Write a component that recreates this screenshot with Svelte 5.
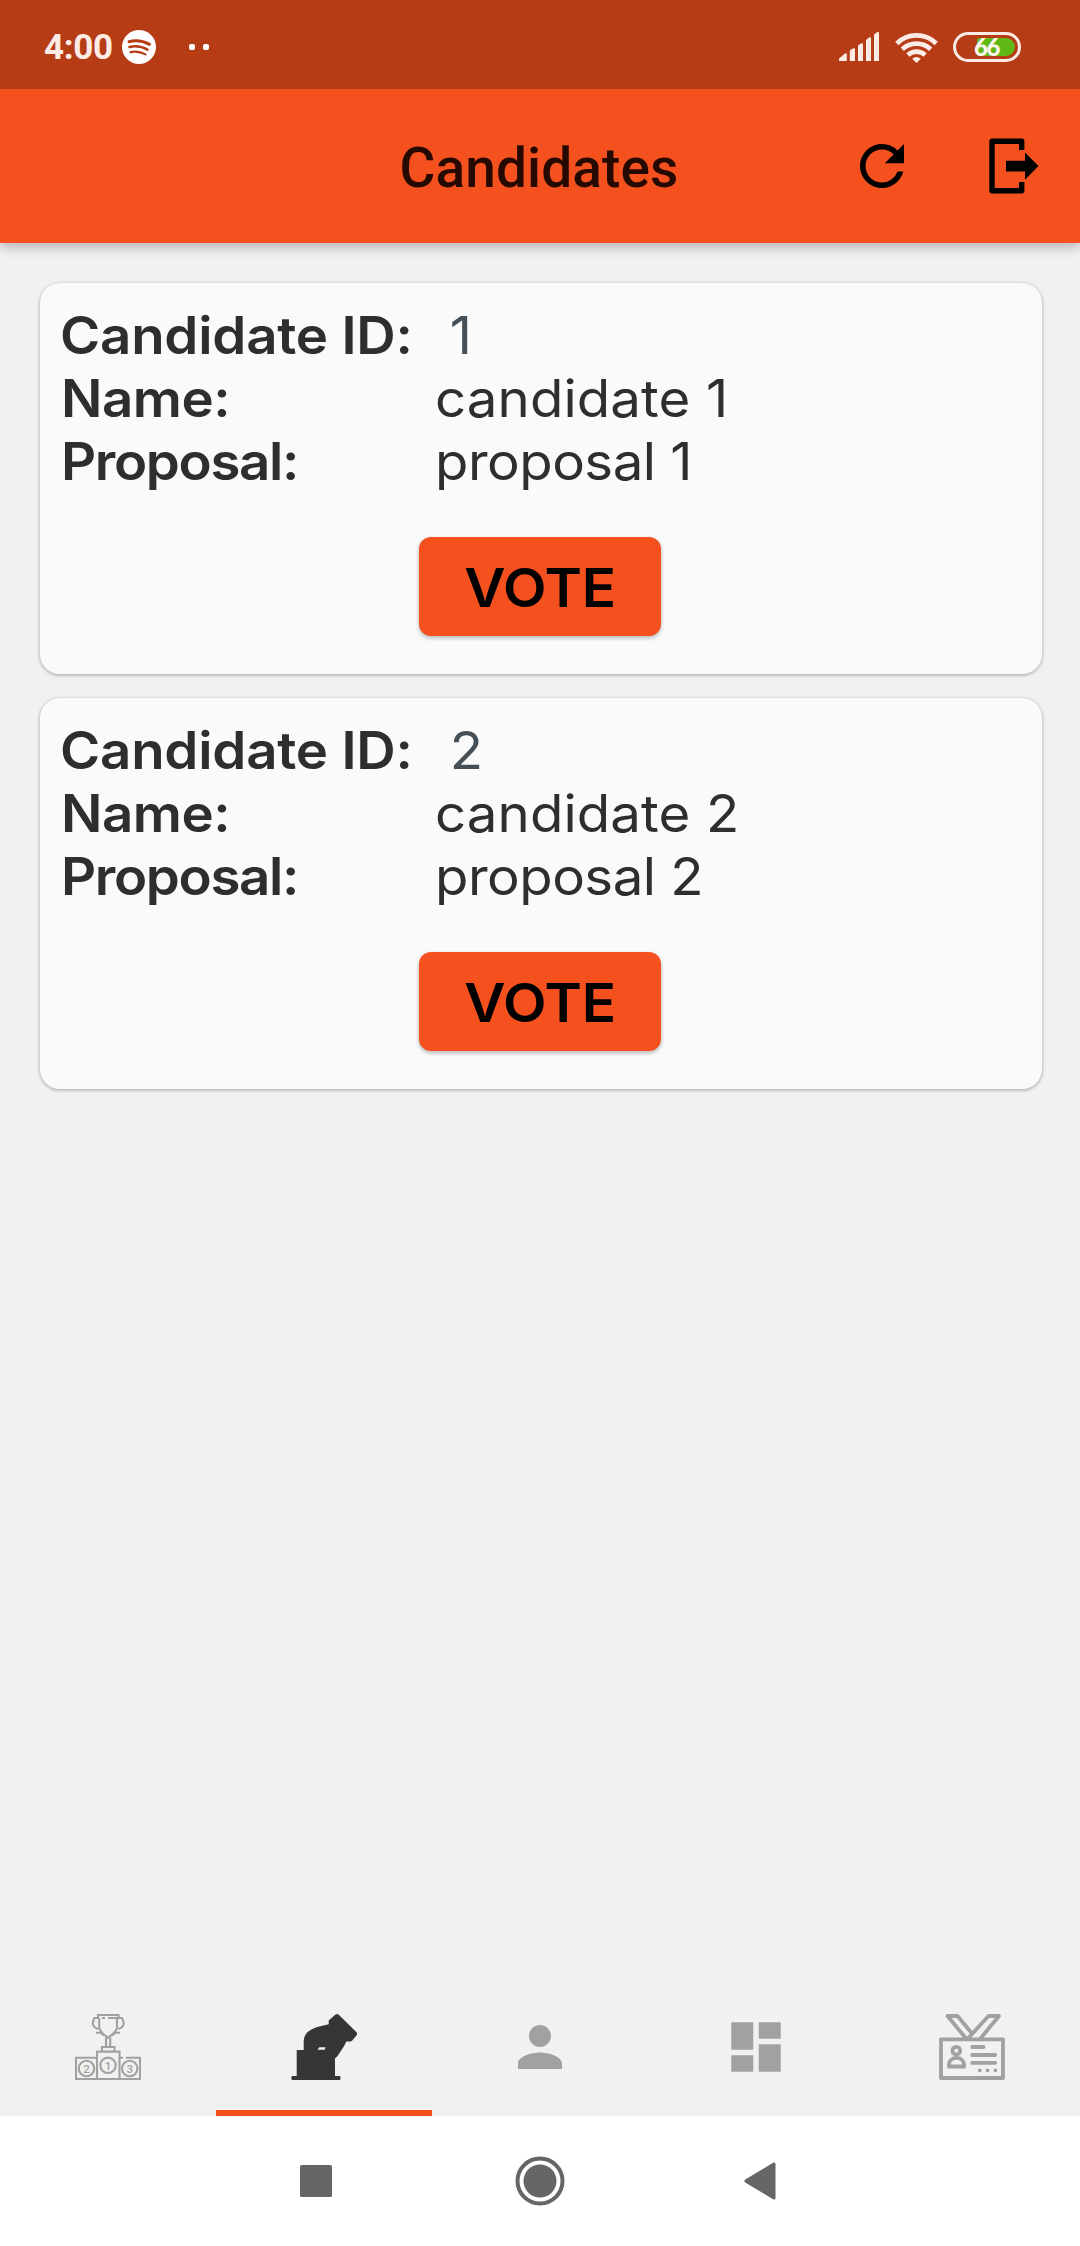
<script>
  const candidates = [
    { id: '1', name: 'candidate 1', proposal: 'proposal 1' },
    { id: '2', name: 'candidate 2', proposal: 'proposal 2' }
  ];
</script>

<div class="screen">
  <div class="status">
    <span class="time">4:00</span>
    <svg class="music" width="34" height="34" viewBox="0 0 34 34">
      <circle cx="17" cy="17" r="17" fill="#fff" />
      <g fill="none" stroke="#b63c16" stroke-linecap="round">
        <path d="M7 11.7q10.500-2.700 20.500 2.600" stroke-width="3" />
        <path d="M7.500 17q9.500-2.300 18 2.600" stroke-width="2.500" />
        <path d="M8.500 22.200q8-1.700 15 2.200" stroke-width="2.200" />
      </g>
    </svg>
    <span class="dots"><i></i><i></i></span>
    <span class="grow"></span>
    <svg class="signal" width="40" height="30" viewBox="0 0 40 30" fill="#fdebe5">
      <path d="M0 29v-2.500l6-5q1.800-.8 1.800.6V29zM10.800 29V18.500l3-2q2.200-.8 2.200.5v12zM19 29V13.500l3-2q2-.8 2 .5v17zM27 29V8l3-2.500q2-.8 2 .5v23zM35 29V2.500L38 .3q2-.8 2 .7v28z" />
    </svg>
    <svg class="wifi" width="43" height="31" viewBox="0 0 43 31" fill="none" stroke="#fdebe5" stroke-width="4.700">
      <path d="M1.800 11.500a28 28 0 0 1 39.400 0M7.300 17.300a20.500 20.500 0 0 1 28.400 0M12.800 23a13 13 0 0 1 17.400 0" />
      <path d="M17.200 26.700q4.300-3.300 8.600 0L21.500 31z" fill="#fdebe5" stroke="none" />
    </svg>
    <span class="battery"><span class="level"></span><b>66</b></span>
  </div>

  <header>
    <h1>Candidates</h1>
    <div class="actions">
      <svg width="66" height="66" viewBox="0 0 24 24">
        <path d="M17.650 6.350A7.958 7.958 0 0 0 12 4c-4.420 0-7.990 3.580-7.990 8s3.570 8 7.990 8c3.730 0 6.840-2.550 7.730-6h-2.080A5.990 5.990 0 0 1 12 18c-3.310 0-6-2.690-6-6s2.690-6 6-6c1.660 0 3.140.69 4.220 1.780L13 11h7V4z" />
      </svg>
      <svg width="50" height="56" viewBox="0 0 50 56">
        <path d="M32.700 12V3.200H3v49.600h29.700V44" fill="none" stroke="#000" stroke-width="5.400" stroke-linejoin="round" />
        <path d="M17 22.700h19V14.400L49.500 28 36 41.700v-8.300H17z" />
      </svg>
    </div>
  </header>

  <main>
    {#each candidates as c}
      <section class="card">
        <dl>
          <dt class="id">Candidate ID:</dt><dd class="number">{c.id}</dd>
          <dt class="name">Name:</dt><dd class="name">{c.name}</dd>
          <dt class="proposal">Proposal:</dt><dd class="proposal">{c.proposal}</dd>
        </dl>
        <button><span>VOTE</span></button>
      </section>
    {/each}
  </main>

  <nav class="tabs">
    <div class="tab">
      <svg width="66" height="66" viewBox="0 0 66 66" fill="none" stroke="#a1a1a1" stroke-width="2.100">
        <path d="M23 4V1h20.500v3M27 4h3M33 4h10.500M24.200 4v10q.8 4 8.800 9.800 8-5.800 9-9.800V4M24 4h-4.500q-4.500 8.500 3.500 11M42.500 4h4.500q4.500 8.500-3.500 11M21 18.700h5l2.500 2.500M45 18.700h-5l-2.500 2.500M31 23.500V33M35.200 23.500V33M27 37v-4h12.500v4" />
        <path d="M22 65V37.600h22.500V65M22 43.700H1V65h64V43.700H51M44.500 43.700H48" />
        <circle cx="11.500" cy="54.500" r="7.700" /><circle cx="33" cy="51.300" r="7.700" /><circle cx="54.700" cy="54.500" r="7.700" />
        <g class="places" fill="#a1a1a1" stroke="none" text-anchor="middle">
          <text x="11.500" y="58.700">2</text><text x="33" y="55.500">1</text><text x="54.700" y="58.700">3</text>
        </g>
      </svg>
    </div>
    <div class="tab active">
      <svg width="66" height="66" viewBox="0 0 66 66" fill="#363636">
        <path fill-rule="evenodd" d="M1 62h4.700V36h7V26.500q.5-7 7.600-11l5-2.300 12.400-2.900V6.500L44.500.6q1.500-1.200 3 0L65.300 18q1.400 1.500.3 3.200l-4.100 5q-1 1.200-2.500 1.200h-3.700L53 32.300l-7 10.500-2 1.400V62h5q1 2 0 4H1q-1.500-2 0-4zM27 35.700h6.700l.8-2.500-6 .1q-1.200.5-1.500 2.400z" />
      </svg>
    </div>
    <div class="tab">
      <svg width="66" height="66" viewBox="0 0 24 24" fill="#a1a1a1">
        <path d="M12 12c2.210 0 4-1.790 4-4s-1.790-4-4-4-4 1.790-4 4 1.790 4 4 4zm0 2c-2.670 0-8 1.340-8 4v2h16v-2c0-2.660-5.330-4-8-4z" />
      </svg>
    </div>
    <div class="tab">
      <svg width="66" height="66" viewBox="0 0 24 24" fill="#a1a1a1">
        <path d="M3 13h8V3H3v10zm0 8h8v-6H3v6zm10 0h8V11h-8v10zm0-18v6h8V3h-8z" />
      </svg>
    </div>
    <div class="tab">
      <svg width="66" height="66" viewBox="0 0 66 66" fill="none" stroke="#a1a1a1" stroke-width="3.800" stroke-linejoin="round">
        <path d="M2 25.300h62V64H2zM27.500 25L8.500 2h10L33 19.500M28.500 25L49.500 2H60L41 25" />
        <circle cx="17.300" cy="36.700" r="3.900" />
        <path d="M9.900 52.500v-2a7.500 6.500 0 0 1 15.200 0v2z" />
        <path d="M33.200 33h11.300M33.200 41h23M33.200 48.800h23" stroke-linecap="round" />
        <path d="M40.700 56.300h.01M48.500 56.300h.01M56.300 56.300h.01" stroke-linecap="round" />
      </svg>
    </div>
  </nav>

  <div class="system">
    <svg width="32" height="32" viewBox="0 0 32 32"><rect width="32" height="32" rx="1.500" fill="#666" /></svg>
    <svg class="home" width="50" height="50" viewBox="0 0 50 50">
      <circle cx="25" cy="25" r="22.500" fill="none" stroke="#666" stroke-width="4" />
      <circle cx="25" cy="25" r="16.500" fill="#666" />
    </svg>
    <svg width="32" height="38" viewBox="0 0 32 38"><path d="M1.200 17.600L29.500.6Q31.500 0 31.500 2v34q0 2-2 1.400L1.200 20.400Q-.5 19 1.200 17.600z" fill="#666" /></svg>
  </div>
</div>

<style>
  :global(body) { margin: 0; }
  * { box-sizing: border-box; }
  svg { display: block; flex: none; }
  .screen {
    width: 1080px;
    height: 2246px;
    display: flex;
    flex-direction: column;
    background: #f1f1f1;
    font-family: Inter, "Open Sans", sans-serif;
    overflow: hidden;
  }
  .status {
    position: relative;
    z-index: 1;
    height: 89px;
    flex: none;
    display: flex;
    align-items: center;
    padding: 5px 59px 0 44px;
    background: #b63c16;
  }
  .time {
    width: 78px;
    padding-top: 1px;
    font: 700 35px/40px Roboto, sans-serif;
    letter-spacing: -0.3px;
    color: #fdebe5;
  }
  .dots { display: flex; gap: 8px; margin-left: 33px; }
  .dots i { width: 6px; height: 6px; border-radius: 2px; background: #fff; }
  .grow { flex: 1; }
  .wifi { margin: 0 15px 0 16px; }
  .battery {
    position: relative;
    width: 68px;
    height: 30px;
    padding: 3px;
    border: 3px solid #fdebe5;
    border-radius: 15px;
  }
  .level {
    display: block;
    width: 38px;
    height: 18px;
    margin-left: auto;
    border-radius: 2px 9px 9px 2px;
    background: #5fb814;
  }
  .battery b {
    position: absolute;
    left: 18px;
    top: 0;
    font: 900 24px/24px Lato, sans-serif;
    letter-spacing: -1.5px;
    color: #fff4ef;
  }
  header {
    height: 154px;
    flex: none;
    display: grid;
    grid-template-columns: 1fr auto 1fr;
    align-items: center;
    background: #f5511e;
    box-shadow: 0 4px 11px rgba(0, 0, 0, 0.26);
  }
  h1 {
    grid-column: 2;
    margin: 0;
    padding: 3px 2px 0 0;
    font: 500 55px/64px Roboto, sans-serif;
    letter-spacing: 0.1px;
    color: #260900;
  }
  .actions {
    display: flex;
    align-items: center;
    justify-content: flex-end;
    gap: 74px;
    padding-right: 41px;
  }
  main {
    flex: 1;
    display: flex;
    flex-direction: column;
    gap: 24px;
    padding: 40px 38px 0 40px;
  }
  .card {
    height: 391px;
    padding: 21px 22px 0;
    border-radius: 20px;
    background: #fafafa;
    box-shadow: 0 1px 3px 1px rgba(0, 0, 0, 0.22);
  }
  dl {
    display: grid;
    grid-template-columns: 373px 1fr;
    grid-auto-rows: 63px;
    margin: 0;
    font-size: 52px;
    line-height: 63px;
    color: #2e2e2e;
    white-space: nowrap;
  }
  dt, dd { transform: scaleX(1.05); transform-origin: left; }
  dt { font-weight: 600; }
  dt.id { letter-spacing: -0.2px; margin-left: -2px; }
  dt.name { letter-spacing: -0.5px; margin-left: -1px; }
  dt.proposal { letter-spacing: -1.3px; margin-left: -1px; }
  dd { margin: 0; }
  dd.number { padding-left: 14px; color: #444f58; }
  dd.name { letter-spacing: 0.1px; }
  dd.proposal { letter-spacing: -0.5px; }
  button {
    display: block;
    width: 242px;
    height: 99px;
    margin: 44px auto 0 357px;
    padding: 0;
    border: 0;
    border-radius: 12px;
    background: #f5511e;
    box-shadow: 0 2px 4px rgba(0, 0, 0, 0.28);
    font: 600 54px/101px Inter, sans-serif;
    letter-spacing: -0.3px;
    color: #000;
  }
  button span { display: block; transform: scaleX(1.05); }
  .tabs { height: 138px; flex: none; display: flex; }
  .tab {
    flex: 1;
    display: flex;
    justify-content: center;
    padding-top: 36px;
    border-bottom: 6px solid transparent;
  }
  .tab.active { border-color: #f5511e; }
  .places { font: 500 11.500px Roboto, sans-serif; }
  .system {
    height: 130px;
    flex: none;
    display: flex;
    align-items: center;
    justify-content: space-between;
    padding: 0 304px 0 300px;
    background: #fff;
  }
  .home { margin-left: 4px; }
</style>
